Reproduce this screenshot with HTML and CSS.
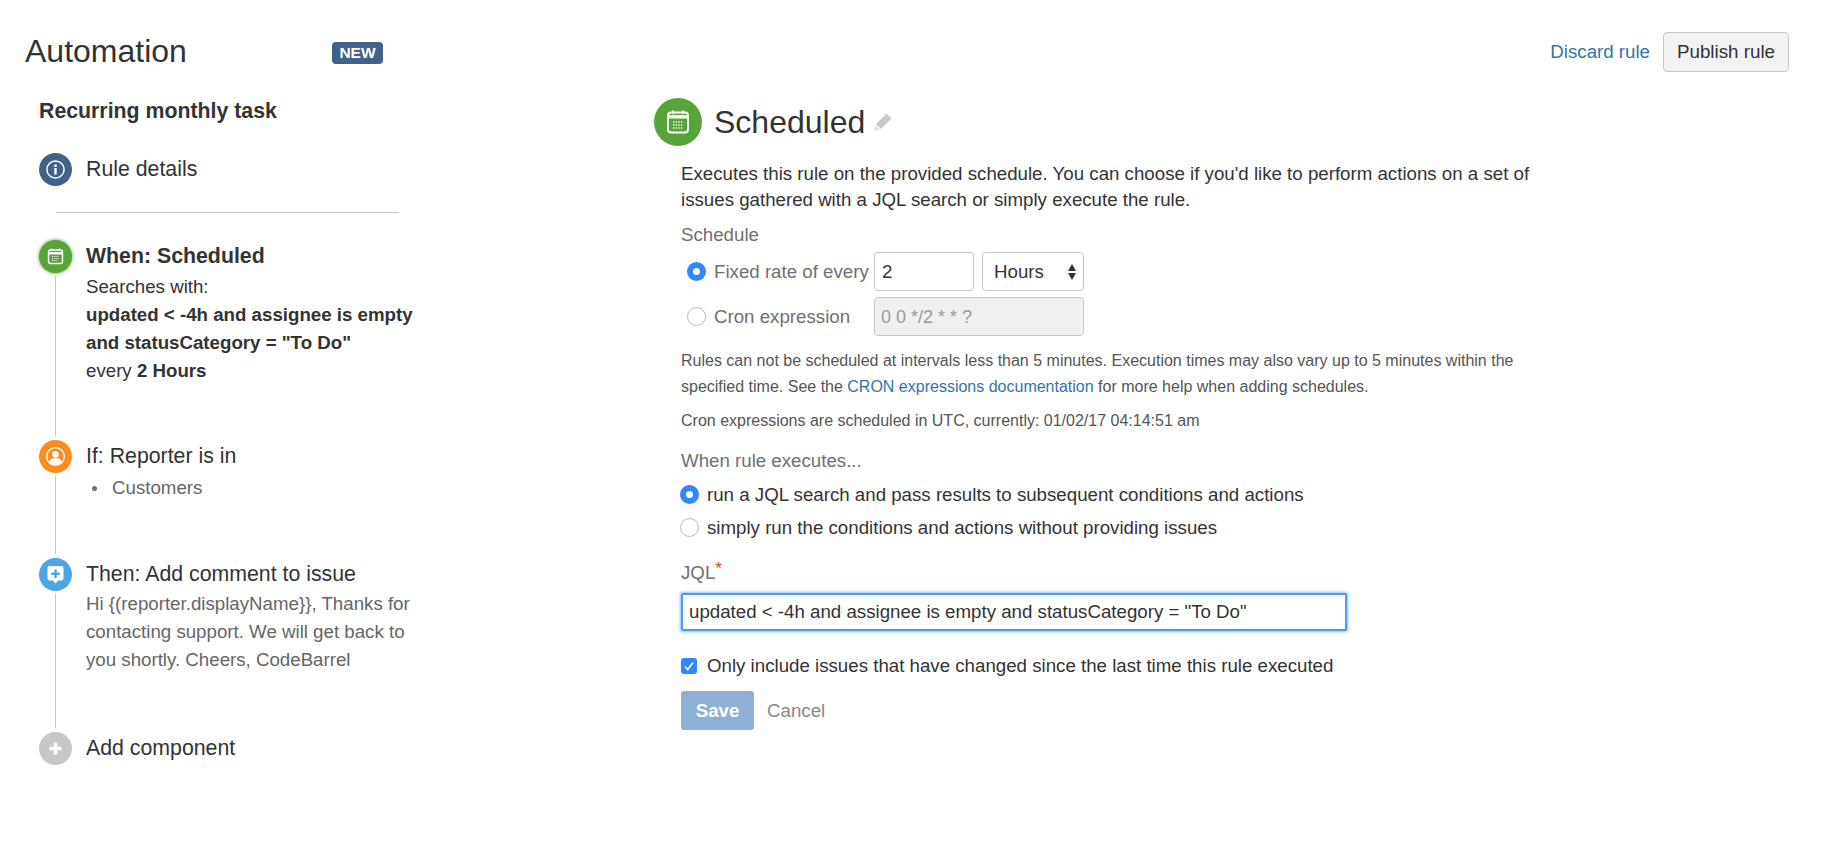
FILE: index.html
```html
<!DOCTYPE html>
<html lang="en">
<head>
<meta charset="utf-8">
<title>Automation</title>
<link rel="stylesheet" href="styles.css">
</head>
<body>
<header class="top">
  <div class="brand"><h1>Automation</h1><span class="badge">NEW</span></div>
  <div class="actions"><a class="link" href="#">Discard rule</a><button class="publish" type="button">Publish rule</button></div>
</header>
<div class="layout">
  <aside class="side">
    <h2 class="rule-name">Recurring monthly task</h2>
    <div class="details">
      <span class="dot navy"><svg viewBox="0 0 33 33" width="33" height="33"><circle cx="16.5" cy="16.5" r="8.6" fill="none" stroke="#fff" stroke-width="1.5"/><rect x="15.3" y="15" width="2.4" height="6.5" fill="#fff"/><rect x="15.3" y="11.5" width="2.4" height="2.4" fill="#fff"/></svg></span>
      <span class="details-label">Rule details</span>
    </div>
    <hr class="rule-sep">
    <div class="step">
      <div class="rail"><span class="dot green glow"><svg viewBox="0 0 33 33" width="33" height="33"><rect x="9.5" y="10" width="14" height="13.5" rx="2" fill="none" stroke="#fff" stroke-width="1.4"/><path d="M9.5 12h14v2.5h-14zM12 8.500h1.200v2.500H12zM19.800 8.500H21v2.500h-1.200z" fill="#fff"/><path d="M13 16.500h7M13 18.500h7M13 20.500h5" stroke="#fff" stroke-width="1" stroke-dasharray="1 .8" opacity=".85"/></svg></span><span class="line"></span></div>
      <div class="body when">
        <div class="step-title strong">When: Scheduled</div>
        <div class="step-text">Searches with:</div>
        <div class="step-text strong">updated &lt; -4h and assignee is empty and statusCategory = "To Do"</div>
        <div class="step-text">every <b>2 Hours</b></div>
      </div>
    </div>
    <div class="step">
      <div class="rail"><span class="dot orange"><svg viewBox="0 0 33 33" width="33" height="33"><circle cx="16.5" cy="16.5" r="8.8" fill="none" stroke="#fff" stroke-width="1.4"/><circle cx="16.5" cy="14.2" r="3.3" fill="#fff"/><path d="M10.2 22c.8-3 3.2-4.2 6.300-4.200s5.500 1.200 6.300 4.200c-1.700 1.600-3.900 2.500-6.300 2.500s-4.600-.9-6.300-2.500z" fill="#fff"/></svg></span><span class="line"></span></div>
      <div class="body if">
        <div class="step-title">If: Reporter is in</div>
        <ul class="bullets"><li>Customers</li></ul>
      </div>
    </div>
    <div class="step">
      <div class="rail"><span class="dot sky"><svg viewBox="0 0 33 33" width="33" height="33"><path d="M10.500 8h12a2 2 0 0 1 2 2v10.500a2 2 0 0 1-2 2h-3.300l-2.700 3-2.700-3h-3.300a2 2 0 0 1-2-2V10a2 2 0 0 1 2-2z" fill="#fff"/><path d="M15.300 11.500h2.400v3h3v2.400h-3v3h-2.400v-3h-3v-2.400h3z" fill="#4ca6e2"/></svg></span><span class="line"></span></div>
      <div class="body then">
        <div class="step-title">Then: Add comment to issue</div>
        <div class="step-text muted">Hi {(reporter.displayName}}, Thanks for contacting support. We will get back to you shortly. Cheers, CodeBarrel</div>
      </div>
    </div>
    <div class="step">
      <div class="rail"><span class="dot grey"><svg viewBox="0 0 33 33" width="33" height="33"><path d="M14.800 10.500h3.400v4.300h4.300v3.400h-4.300v4.300h-3.400v-4.300h-4.300v-3.400h4.300z" fill="#fff"/></svg></span></div>
      <div class="body"><div class="step-title">Add component</div></div>
    </div>
  </aside>
  <main class="main">
    <div class="main-head">
      <span class="dot big green"><svg viewBox="0 0 48 48" width="48" height="48"><rect x="14" y="14.500" width="20" height="20" rx="3" fill="none" stroke="#fff" stroke-width="1.800"/><path d="M14 17h20v3.500H14zM18 12.500h1.800v3.500H18zM28.200 12.500H30v3.500h-1.800z" fill="#fff"/><path d="M19 24h10M19 27h10M19 30h10" stroke="#fff" stroke-width="1.500" stroke-dasharray="1.500 1.100" opacity=".9"/></svg></span>
      <h2 class="main-title">Scheduled</h2>
      <svg class="pencil" viewBox="0 0 18 18" width="18" height="18"><path d="M12.500 .5l5 5L7 16 2 11z" fill="#c9c9c9"/><path d="M1.500 12l4.500 4.500L0 18z" fill="#e4e4e4"/></svg>
    </div>
    <div class="form">
      <p class="desc">Executes this rule on the provided schedule. You can choose if you'd like to perform actions on a set of issues gathered with a JQL search or simply execute the rule.</p>
      <div class="label schedule-label">Schedule</div>
      <div class="sched-row">
        <span class="radio on"></span><span class="sched-label">Fixed rate of every</span>
        <input class="field num" type="text" value="2">
        <div class="select"><span>Hours</span><svg viewBox="0 0 10 18" width="10" height="18"><path d="M5 1l4 7H1zM5 17l4-7H1z" fill="#333"/></svg></div>
      </div>
      <div class="sched-row">
        <span class="radio"></span><span class="sched-label">Cron expression</span>
        <input class="field cron" type="text" value="0 0 */2 * * ?" disabled>
      </div>
      <p class="note first"><span class="note-line">Rules can not be scheduled at intervals less than 5 minutes. Execution times may also vary up to 5 minutes within the</span><span class="note-line">specified time. See the <a class="link" href="#">CRON expressions documentation</a> for more help when adding schedules.</span></p>
      <p class="note utc">Cron expressions are scheduled in UTC, currently: 01/02/17 04:14:51 am</p>
      <div class="label when-label">When rule executes...</div>
      <div class="choice"><span class="radio on"></span><span>run a JQL search and pass results to subsequent conditions and actions</span></div>
      <div class="choice"><span class="radio"></span><span>simply run the conditions and actions without providing issues</span></div>
      <div class="label jql-label">JQL<span class="req">*</span></div>
      <input class="jql" type="text" value='updated &lt; -4h and assignee is empty and statusCategory = "To Do"'>
      <div class="check-row"><span class="check"><svg viewBox="0 0 16 16" width="16" height="16"><path d="M4 8.500l2.800 3L12 4.500" fill="none" stroke="#fff" stroke-width="1.500"/></svg></span><span>Only include issues that have changed since the last time this rule executed</span></div>
      <div class="buttons"><button class="save" type="button">Save</button><a class="cancel" href="#">Cancel</a></div>
    </div>
  </main>
</div>
</body>
</html>
```
FILE: styles.css
```css
* { box-sizing: border-box; }
html, body { margin: 0; padding: 0; background: #fff; }
body {
  width: 1840px;
  height: 853px;
  overflow: hidden;
  color: #333;
  font-family: "Liberation Sans", Arial, sans-serif;
  font-size: 18.7px;
}
h1, h2, p, ul { margin: 0; padding: 0; font-weight: normal; }
a { text-decoration: none; }

.top { display: flex; justify-content: space-between; align-items: center; height: 40px; margin-top: 32px; padding: 0 51px 0 25px; }
.brand { display: flex; align-items: center; }
.brand h1 { font-size: 32px; line-height: 38px; padding-bottom: 2px; width: 307px; }
.badge { width: 51px; height: 22px; margin-top: 2px; border-radius: 4px; background: #42628a; color: #fff; font-size: 15.500px; line-height: 22px; font-weight: bold; text-align: center; }
.actions { display: flex; align-items: center; gap: 13px; }
.link { color: #3572b0; }
.publish { width: 126px; height: 40px; padding: 0; border: 1px solid #c7c7c7; border-radius: 4px; background: #f3f3f3; color: #333; font: 18.800px "Liberation Sans", Arial, sans-serif; }

.layout { display: flex; padding: 26px 0 0 39px; }
.side { width: 615px; flex: none; }
.rule-name { font-size: 21.300px; line-height: 26px; font-weight: bold; }

.details { display: flex; align-items: center; gap: 14px; margin-top: 29px; font-size: 21.300px; }
.dot { display: block; flex: none; width: 33px; height: 33px; border-radius: 50%; }
.dot svg { display: block; }
.navy { background: #42628a; }
.green { background: #57a53a; }
.orange { background: #f98e20; }
.sky { background: #4ca6e2; }
.grey { background: #c7c7c7; }
.glow { box-shadow: 0 0 3px 1px rgba(87, 165, 58, .6); }
.rule-sep { width: 343px; height: 1px; margin: 26px 0 27px 17px; border: 0; background: #c7c7c7; }

.step { display: flex; gap: 14px; }
.rail { display: flex; flex-direction: column; align-items: center; width: 33px; flex: none; }
.line { flex: 1; width: 1px; margin: 3px 0 4px; background: #c7c7c7; }
.body { width: 345px; }
.when { padding-bottom: 55px; }
.if { padding-bottom: 56px; }
.then { padding-bottom: 58px; }
.step-title { font-size: 21.300px; line-height: 33px; }
.step-text { font-size: 18.700px; line-height: 28px; }
.strong { font-weight: bold; }
.muted, .bullets { color: #666; }
.muted { margin-top: -1px; }
.bullets { list-style: none; font-size: 18.700px; line-height: 28px; margin-top: 1px; padding-left: 26px; position: relative; }
.bullets li::before { content: ""; position: absolute; left: 6px; top: 12px; width: 5px; height: 5px; border-radius: 50%; background: #707070; }

.main { flex: none; width: 1186px; }
.main-head { display: flex; align-items: center; height: 48px; }
.big { width: 48px; height: 48px; }
.main-title { margin-left: 12px; font-size: 32px; line-height: 48px; }
.pencil { margin: 0 0 0 9px; }
.form { padding-left: 27px; }
.desc { width: 870px; margin-top: 15px; line-height: 26px; font-size: 18.700px; }
.label { color: #707070; font-size: 18.700px; line-height: 26px; }
.schedule-label { margin-top: 9px; }
.sched-row { display: flex; align-items: center; height: 39px; margin-top: 4px; color: #707070; font-size: 18.700px; }
.sched-row + .sched-row { margin-top: 6px; }
.sched-row .radio { margin-left: 6px; }
.sched-label { width: 160px; margin-left: 8px; padding-top: 1px; }
.field { height: 39px; border: 1px solid #c7c7c7; border-radius: 4px; padding: 1px 7px 0; font: 18.700px "Liberation Sans", Arial, sans-serif; color: #333; background: #fff; }
.num { width: 100px; }
.cron { width: 210px; padding-left: 6px; font-size: 18px; background: #f0f0f0; color: #999; }
.select { display: flex; align-items: center; justify-content: space-between; width: 102px; height: 39px; margin-left: 8px; padding: 1px 6px 0 11px; border: 1px solid #c7c7c7; border-radius: 4px; color: #333; }
.radio { display: block; flex: none; width: 19px; height: 19px; border: 1px solid #bcbcbc; border-radius: 50%; background: #fff; }
.radio.on { border: 6.500px solid #2f88ff; background: #fff; }
.note { width: 870px; color: #555; font-size: 16px; line-height: 26px; }
.note-line { display: block; }
.first { margin-top: 12px; }
.utc { margin-top: 8px; }
.when-label { margin-top: 14px; }
.choice { display: flex; align-items: center; gap: 8px; height: 33px; margin-left: -1px; font-size: 18.700px; }
.when-label + .choice { margin-top: 4px; }
.jql-label { margin-top: 16px; }
.req { color: #d04437; vertical-align: 5px; font-size: 17px; line-height: 1; }
.jql { display: block; width: 666px; height: 38px; margin-top: 7px; padding: 0 6px; border: 2px solid #4a9bf5; border-radius: 2px; box-shadow: 0 0 3px 1px rgba(47, 136, 255, .55); outline: none; font: 18.700px "Liberation Sans", Arial, sans-serif; color: #333; }
.check-row { display: flex; align-items: center; gap: 10px; margin-top: 24px; height: 22px; font-size: 18.700px; }
.check { display: block; flex: none; width: 16px; height: 16px; border-radius: 3px; background: #2f88ff; }
.check svg { display: block; }
.buttons { display: flex; align-items: center; gap: 13px; margin-top: 14px; }
.save { width: 73px; height: 39px; padding: 0; border: 0; border-radius: 3px; background: #8fb0d6; color: #fff; font: bold 18.700px "Liberation Sans", Arial, sans-serif; }
.cancel { color: #888; font-size: 18.700px; }
```
